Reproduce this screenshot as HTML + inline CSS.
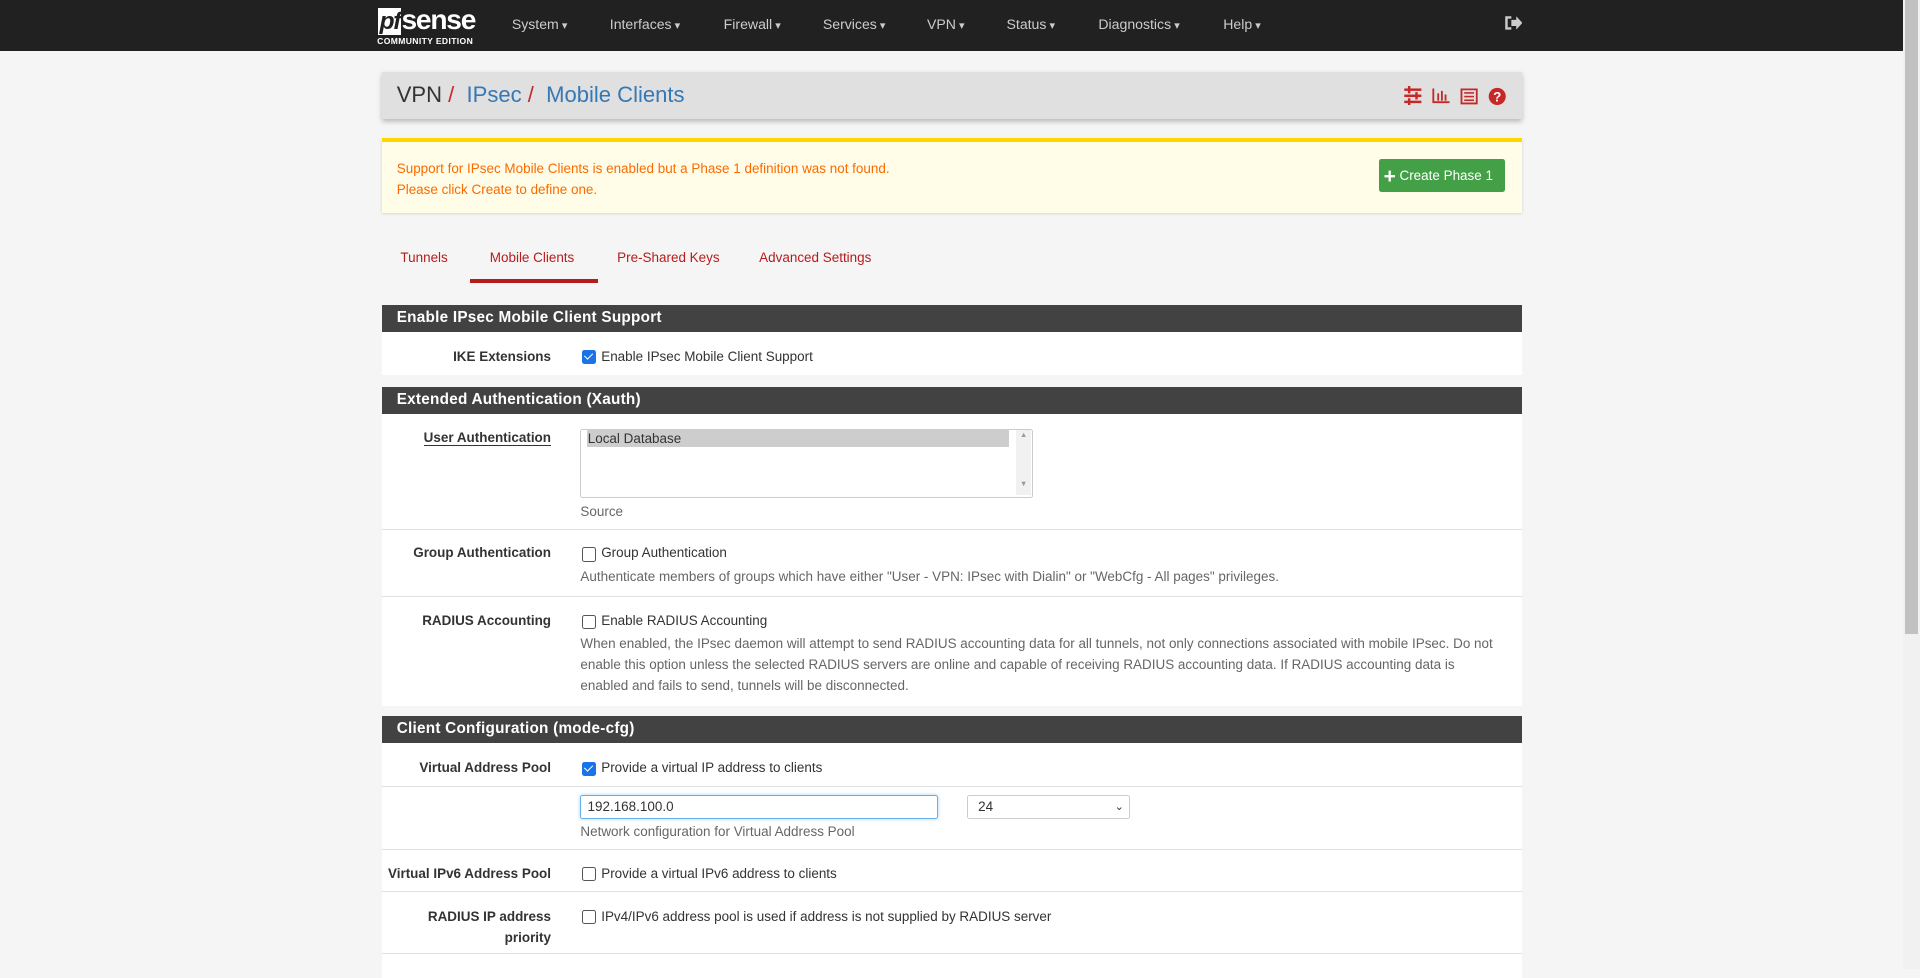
<!DOCTYPE html>
<html><head><meta charset="utf-8"><style>
html,body{margin:0;padding:0;width:1920px;height:969px;overflow:hidden;background:#f5f5f5;}
#w{position:absolute;left:0;top:0;width:1568px;height:791px;zoom:1.22449;font-family:"Liberation Sans",sans-serif;font-size:11px;color:#333;}
.a{position:absolute;}
.nav{left:0;top:0;width:1554px;height:42px;background:#212121;}
.ni{top:13px;color:#ccc;font-size:11.5px;white-space:nowrap;}
.ni:after{content:" \25BE";font-size:9px;}
.hd{left:312px;width:931px;height:22px;background:#424242;color:#fff;font-weight:bold;font-size:12.5px;line-height:22px;text-indent:12px;letter-spacing:.2px}
.row{left:312px;width:931px;background:#fff;border-top:1px solid #e0e0e0;}
.lb{width:138px;text-align:right;font-weight:bold;font-size:11px;color:#333;}
.cb{width:10px;height:10px;border:1px solid #555;border-radius:2px;background:#fff;}
.cb.on{background:#1a73e8;border-color:#1a73e8;}
.cb.on:after{content:"";position:absolute;left:3px;top:0px;width:3px;height:6px;border:solid #fff;border-width:0 1.5px 1.5px 0;transform:rotate(45deg);}
.tx{font-size:11px;color:#333;white-space:nowrap;}
.hl{font-size:11px;color:#666;line-height:17px;}
</style></head><body><div id="w">
<div class="a nav"></div>
<div class="a" style="left:309px;top:3px;color:#fff;font-weight:bold;font-size:23px;letter-spacing:-1px;font-style:italic;"><span style="background:#fff;color:#212121;padding:0 1px;font-size:20px">pf</span><span style="font-style:normal">sense</span></div>
<div class="a" style="left:308px;top:29px;color:#fff;font-size:7px;font-weight:bold;letter-spacing:.3px">COMMUNITY EDITION</div>
<div class="a ni" style="left:418px">System</div>
<div class="a ni" style="left:498px">Interfaces</div>
<div class="a ni" style="left:591px">Firewall</div>
<div class="a ni" style="left:672px">Services</div>
<div class="a ni" style="left:757px">VPN</div>
<div class="a ni" style="left:822px">Status</div>
<div class="a ni" style="left:897px">Diagnostics</div>
<div class="a ni" style="left:999px">Help</div>
<svg class="a" style="left:1228px;top:12px" width="15" height="13" viewBox="0 0 15 13"><path d="M1 1h5v2H3v7h3v2H1z" fill="#ccc"/><path d="M6 4h4V1l5 5.5-5 5.5V9H6z" fill="#ccc"/></svg>
<div class="a" style="left:1554px;top:0;width:14px;height:791px;background:#f1f1f1"></div>
<div class="a" style="left:1556px;top:0;width:10px;height:518px;background:#c1c1c1"></div>

<div class="a" style="left:312px;top:59px;width:931px;height:38px;background:#e0e0e0;box-shadow:0 2px 4px rgba(0,0,0,.25)"></div>
<div class="a" style="left:324px;top:67px;font-size:18px;color:#333;white-space:pre">VPN <span style="color:#c62828">/</span>  <span style="color:#3578b5">IPsec</span> <span style="color:#c62828">/</span>  <span style="color:#3578b5">Mobile Clients</span></div>
<svg class="a" style="left:1146px;top:70px" width="86" height="16" viewBox="0 0 86 16" fill="#c62828"><rect x="1" y="2" width="14" height="2"/><rect x="1" y="7" width="14" height="2"/><rect x="1" y="12" width="14" height="2"/><rect x="4" y="0" width="2" height="6"/><rect x="10" y="5" width="2" height="6"/><rect x="4" y="10" width="2" height="6"/><path d="M24 2v12h14v-1.5H25.5V2z"/><rect x="28" y="6" width="1.5" height="6"/><rect x="31" y="4" width="1.5" height="8"/><rect x="34" y="7" width="1.5" height="5"/><path d="M47 2h14v13H47zM48.5 3.5v10h11v-10z"/><rect x="50" y="5" width="8" height="1.3"/><rect x="50" y="8" width="8" height="1.3"/><rect x="50" y="11" width="8" height="1.3"/><circle cx="77" cy="8.5" r="7"/><text x="77" y="12.5" font-size="11" font-weight="bold" fill="#fff" text-anchor="middle" font-family="Liberation Sans">?</text></svg>

<div class="a" style="left:312px;top:113px;width:931px;height:58px;background:#fffde7;border-top:4px solid #ffd600;box-shadow:0 1px 2px rgba(0,0,0,.15)"></div>
<div class="a" style="left:324px;top:130px;color:#fb6a00;font-size:11px;line-height:17px">Support for IPsec Mobile Clients is enabled but a Phase 1 definition was not found.<br>Please click Create to define one.</div>
<div class="a" style="left:1126px;top:130px;width:103px;height:27px;background:#43a047;border-radius:2px;color:#fff;font-size:11px;line-height:27px;white-space:nowrap"><span style="font-size:17px;font-weight:bold;margin:0 3px 0 4px;vertical-align:-2px">+</span>Create Phase 1</div>

<div class="a" style="left:327px;top:204px;color:#b71c1c;font-size:11px">Tunnels</div>
<div class="a" style="left:400px;top:204px;color:#b71c1c;font-size:11px">Mobile Clients</div>
<div class="a" style="left:504px;top:204px;color:#b71c1c;font-size:11px">Pre-Shared Keys</div>
<div class="a" style="left:620px;top:204px;color:#b71c1c;font-size:11px">Advanced Settings</div>
<div class="a" style="left:384px;top:228px;width:104px;height:3px;background:#b71c1c"></div>

<div class="a hd" style="top:249px">Enable IPsec Mobile Client Support</div>
<div class="a row" style="top:271px;height:35px;border-top:0"></div>
<div class="a lb" style="left:312px;top:285px">IKE Extensions</div>
<div class="a cb on" style="left:475px;top:286px"></div>
<div class="a tx" style="left:491px;top:285px">Enable IPsec Mobile Client Support</div>

<div class="a hd" style="top:316px">Extended Authentication (Xauth)</div>
<div class="a row" style="top:338px;height:94px;border-top:0"></div>
<div class="a lb" style="left:312px;top:351px"><span style="border-bottom:1px solid #333">User Authentication</span></div>
<div class="a" style="left:474px;top:350px;width:368px;height:55px;border:1px solid #ccc;border-radius:2px;background:#fff"></div>
<div class="a" style="left:479px;top:351px;width:345px;height:14px;background:#cdcdcd;font-size:11px;line-height:14px;text-indent:1px">Local Database</div>
<div class="a" style="left:830px;top:351px;width:12px;height:53px;background:#f1f1f1;color:#999;font-size:6px;text-align:center;line-height:8px">▲<br><br><br><br><br>▼</div>
<div class="a hl" style="left:474px;top:410px">Source</div>

<div class="a row" style="top:432px;height:55px"></div>
<div class="a lb" style="left:312px;top:445px">Group Authentication</div>
<div class="a cb" style="left:475px;top:447px"></div>
<div class="a tx" style="left:491px;top:445px">Group Authentication</div>
<div class="a hl" style="left:474px;top:463px">Authenticate members of groups which have either "User - VPN: IPsec with Dialin" or "WebCfg - All pages" privileges.</div>

<div class="a row" style="top:487px;height:89px"></div>
<div class="a lb" style="left:312px;top:501px">RADIUS Accounting</div>
<div class="a cb" style="left:475px;top:502px"></div>
<div class="a tx" style="left:491px;top:501px">Enable RADIUS Accounting</div>
<div class="a hl" style="left:474px;top:518px;width:756px">When enabled, the IPsec daemon will attempt to send RADIUS accounting data for all tunnels, not only connections associated with mobile IPsec. Do not enable this option unless the selected RADIUS servers are online and capable of receiving RADIUS accounting data. If RADIUS accounting data is enabled and fails to send, tunnels will be disconnected.</div>

<div class="a hd" style="top:585px">Client Configuration (mode-cfg)</div>
<div class="a row" style="top:607px;height:35px;border-top:0"></div>
<div class="a lb" style="left:312px;top:621px">Virtual Address Pool</div>
<div class="a cb on" style="left:475px;top:622px"></div>
<div class="a tx" style="left:491px;top:621px">Provide a virtual IP address to clients</div>

<div class="a row" style="top:642px;height:51px"></div>
<div class="a" style="left:474px;top:649px;width:290px;height:18px;border:1px solid #66afe9;border-radius:2px;background:#fff;box-shadow:0 0 3px rgba(102,175,233,.6);font-size:11px;line-height:18px;text-indent:5px">192.168.100.0</div>
<div class="a" style="left:790px;top:649px;width:131px;height:18px;border:1px solid #ccc;border-radius:2px;background:#fff;font-size:11px;line-height:18px;text-indent:8px">24<span style="position:absolute;right:4px;top:0;font-size:9px">&#8964;</span></div>
<div class="a hl" style="left:474px;top:671px">Network configuration for Virtual Address Pool</div>

<div class="a row" style="top:693px;height:35px"></div>
<div class="a lb" style="left:312px;top:707px">Virtual IPv6 Address Pool</div>
<div class="a cb" style="left:475px;top:708px"></div>
<div class="a tx" style="left:491px;top:707px">Provide a virtual IPv6 address to clients</div>

<div class="a row" style="top:728px;height:50px"></div>
<div class="a lb" style="left:312px;top:741px;line-height:17px">RADIUS IP address<br>priority</div>
<div class="a cb" style="left:475px;top:743px"></div>
<div class="a tx" style="left:491px;top:742px">IPv4/IPv6 address pool is used if address is not supplied by RADIUS server</div>

<div class="a row" style="top:778px;height:20px"></div>
</div></body></html>
